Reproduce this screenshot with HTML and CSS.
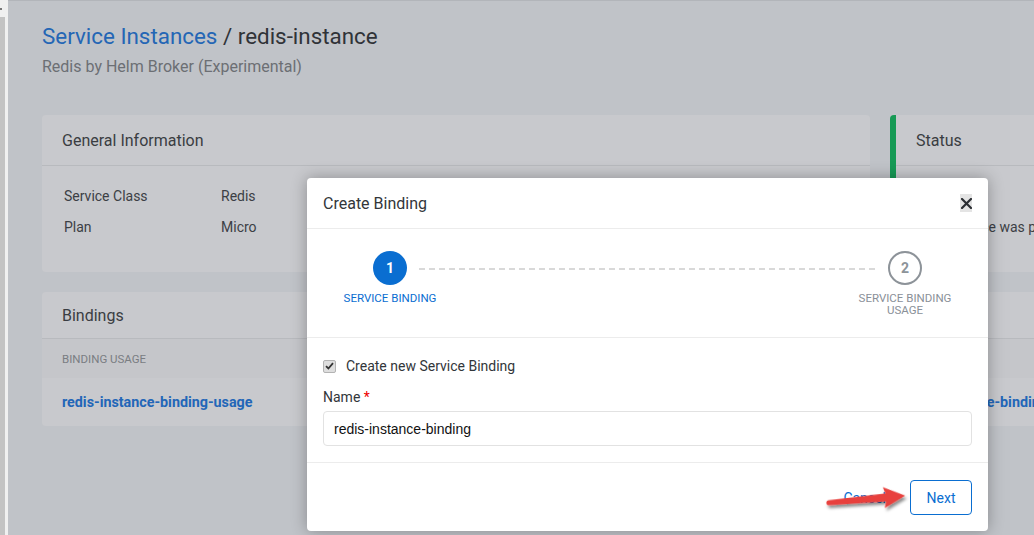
FILE: index.html
```html
<!DOCTYPE html>
<html lang="en">
<head>
<meta charset="utf-8">
<title>redis-instance</title>
<link rel="stylesheet" href="styles.css">
</head>
<body>
<div class="app">
  <aside class="edge">
    <div class="edge-top"><span class="edge-mark"></span></div>
    <div class="edge-track"></div>
  </aside>
  <main class="page">
    <header class="page-header">
      <h1 class="title"><a class="crumb" href="#">Service Instances</a> / redis-instance</h1>
      <p class="subtitle">Redis by Helm Broker (Experimental)</p>
    </header>

    <section class="cards-row">
      <div class="card card-info">
        <div class="card-head">General Information</div>
        <div class="card-body info-grid">
          <span>Service Class</span><span>Redis</span>
          <span>Plan</span><span>Micro</span>
        </div>
      </div>
      <div class="card card-status">
        <div class="card-head">Status</div>
        <div class="card-body status-body">
          <span>Running</span>
          <span>The instance was provisioned successfully</span>
        </div>
      </div>
    </section>

    <section class="card card-bindings">
      <div class="card-head card-head-sm">Bindings</div>
      <div class="table">
        <div class="table-row table-header"><span>Binding Usage</span><span>Binding</span></div>
        <div class="table-row table-body"><a href="#">redis-instance-binding-usage</a><a href="#">redis-instance-binding</a></div>
      </div>
    </section>

    <div class="modal">
      <div class="modal-head">
        <span class="modal-title">Create Binding</span>
        <span class="close">
          <svg width="11" height="11" viewBox="0 0 11 11"><path d="M1 1 L10 10 M10 1 L1 10" stroke="#2b2e33" stroke-width="2.2" stroke-linecap="square"/></svg>
        </span>
      </div>
      <div class="wizard">
        <div class="step active">
          <span class="step-circle">1</span>
          <span class="step-label">Service Binding</span>
        </div>
        <div class="connector"></div>
        <div class="step todo">
          <span class="step-circle">2</span>
          <span class="step-label">Service Binding Usage</span>
        </div>
      </div>
      <div class="modal-body">
        <label class="check-row">
          <span class="checkbox">
            <svg width="9" height="8" viewBox="0 0 9 8"><path d="M1 4.2 L3.4 6.5 L8 1.2" fill="none" stroke="#333" stroke-width="1.8"/></svg>
          </span>
          Create new Service Binding
        </label>
        <div class="field-label">Name <span class="req">*</span></div>
        <input class="text-input" type="text" value="redis-instance-binding" readonly>
      </div>
      <div class="modal-foot">
        <button class="btn btn-plain">Cancel</button>
        <button class="btn btn-outline">Next</button>
      </div>
    </div>

    <svg class="arrow" width="100" height="45" viewBox="0 0 100 45">
      <defs>
        <filter id="sh" x="-20%" y="-50%" width="150%" height="220%">
          <feDropShadow dx="1.5" dy="3" stdDeviation="1.8" flood-color="#000" flood-opacity="0.45"/>
        </filter>
      </defs>
      <g transform="translate(9 22.7) rotate(-5.3)" filter="url(#sh)">
        <path d="M0 -2.6 L57 -4 L55 -10.5 L76.5 0 L55 10.5 L57 4 L0 2.6 A2.6 2.6 0 0 1 0 -2.6 Z" fill="#e8403c"/>
      </g>
    </svg>
  </main>
</div>
</body>
</html>
```

FILE: styles.css
```css
* { box-sizing: border-box; }

html, body {
  margin: 0;
  padding: 0;
}

body {
  font-family: Roboto, "Liberation Sans", Arial, sans-serif;
  background: #f0f0f0;
}

.app {
  display: flex;
  width: 1034px;
  height: 535px;
  overflow: hidden;
  background: #f0f0f0;
}

/* left window edge */
.edge {
  width: 8px;
  flex: none;
  display: flex;
  flex-direction: column;
  background: #f0f0f0;
}
.edge-top {
  height: 17px;
  position: relative;
}
.edge-mark {
  position: absolute;
  left: 0;
  top: 8px;
  width: 2px;
  height: 2px;
  background: #777;
}
.edge-track {
  flex: 1;
  width: 5px;
  background: #c3c3c3;
}

/* page */
.page {
  flex: 1;
  position: relative;
  overflow: hidden;
  background: #c0c3c8;
  border-top: 1px solid #b2b5ba;
  padding: 20px 0 0 34px;
}

.title {
  margin: 0;
  font-size: 22.4px;
  font-weight: 400;
  line-height: 30px;
  color: #303338;
}
.crumb {
  color: #2466b5;
  text-decoration: none;
}
.subtitle {
  margin: 6px 0 0;
  font-size: 16px;
  line-height: 20px;
  color: #6c6f74;
}

.cards-row {
  display: flex;
  gap: 20px;
  margin-top: 38px;
}

.card {
  background: #c8c9cd;
  border-radius: 4px;
  overflow: hidden;
}
.card-info {
  width: 828px;
  flex: none;
}
.card-status {
  width: 300px;
  flex: none;
  border-left: 6px solid #179a55;
}

.card-head {
  height: 51px;
  display: flex;
  align-items: center;
  padding: 0 20px;
  font-size: 16px;
  color: #3a3d42;
  border-bottom: 1px solid #b8babe;
}
.card-head-sm {
  height: 47px;
}

.card-body {
  display: grid;
  grid-auto-rows: 31px;
  align-items: center;
  padding: 14px 22px 30px;
  font-size: 14px;
  color: #3c3f45;
}
.info-grid {
  grid-template-columns: 157px auto;
}
.status-body {
  grid-template-columns: auto;
  padding-left: 20px;
  white-space: nowrap;
}

.card-bindings {
  width: 1200px;
  margin-top: 20px;
}

.table-row {
  display: grid;
  grid-template-columns: 840px auto;
  align-items: center;
  padding: 0 20px;
}
.table-header {
  height: 39px;
  background: #c5c6ca;
  font-size: 11.5px;
  text-transform: uppercase;
  color: #7a7d82;
}
.table-body {
  height: 48px;
  font-size: 14.3px;
  font-weight: 700;
}
.table-body a {
  color: #2266b8;
  text-decoration: none;
}

/* modal */
.modal {
  position: absolute;
  left: 299px;
  top: 177px;
  width: 681px;
  height: 353px;
  background: #fff;
  border-radius: 4px;
  box-shadow: 0 0 16px rgba(0, 0, 0, 0.3);
  display: flex;
  flex-direction: column;
}

.modal-head {
  height: 51px;
  flex: none;
  display: flex;
  align-items: center;
  justify-content: space-between;
  padding: 0 16px;
  border-bottom: 1px solid #ececec;
}
.modal-title {
  font-size: 16px;
  color: #32363a;
}
.close {
  width: 12px;
  height: 18px;
  background: #e4e4e4;
  display: flex;
  align-items: center;
  justify-content: center;
}

.wizard {
  height: 109px;
  flex: none;
  display: flex;
  align-items: flex-start;
  padding: 22px 33px 0;
  border-bottom: 1px solid #ececec;
}
.step {
  width: 100px;
  flex: none;
  display: flex;
  flex-direction: column;
  align-items: center;
  text-align: center;
  position: relative;
  z-index: 1;
}
.step-circle {
  width: 34px;
  height: 34px;
  border-radius: 50%;
  display: flex;
  align-items: center;
  justify-content: center;
  font-size: 14px;
  font-weight: 700;
}
.step.active .step-circle {
  background: #0a6ed1;
  color: #fff;
}
.step.todo .step-circle {
  background: #fff;
  border: 2px solid #8d9399;
  color: #8d9399;
}
.step-label {
  margin-top: 7px;
  font-size: 11.5px;
  line-height: 12px;
  text-transform: uppercase;
}
.step.active .step-label {
  color: #0a6ed1;
}
.step.todo .step-label {
  color: #8a9098;
}
.connector {
  flex: 1;
  height: 2px;
  margin: 17px -21px 0;
  background: repeating-linear-gradient(90deg, #d9d9d9 0 6px, transparent 6px 10px);
}

.modal-body {
  height: 125px;
  flex: none;
  padding: 18px 16px 0;
  border-bottom: 1px solid #ececec;
}
.check-row {
  display: flex;
  align-items: center;
  gap: 10px;
  height: 20px;
  font-size: 14px;
  color: #32363a;
}
.checkbox {
  width: 13px;
  height: 13px;
  border: 1px solid #b3b3b3;
  border-radius: 2px;
  background: #dedede;
  display: flex;
  align-items: center;
  justify-content: center;
}
.field-label {
  margin-top: 11px;
  height: 20px;
  line-height: 20px;
  font-size: 14px;
  color: #32363a;
}
.req {
  color: #e00;
}
.text-input {
  display: block;
  margin-top: 4px;
  width: 100%;
  height: 35px;
  padding: 0 10px;
  border: 1px solid #e2e2e2;
  border-radius: 4px;
  font-family: "Liberation Sans", Arial, sans-serif;
  font-size: 14px;
  color: #111;
  background: #fff;
  outline: none;
}

.modal-foot {
  flex: 1;
  display: flex;
  justify-content: flex-end;
  align-items: flex-start;
  gap: 8px;
  padding: 17px 16px 0;
}
.btn {
  height: 35px;
  font-family: Roboto, "Liberation Sans", Arial, sans-serif;
  font-size: 14px;
  color: #0a6ed1;
  background: #fff;
  border-radius: 4px;
  cursor: pointer;
}
.btn-plain {
  border: 1px solid transparent;
  padding: 0 15px;
}
.btn-outline {
  width: 62px;
  border: 1px solid #0a6ed1;
  padding: 0;
}

.arrow {
  position: absolute;
  left: 812px;
  top: 479px;
  overflow: visible;
}
```
